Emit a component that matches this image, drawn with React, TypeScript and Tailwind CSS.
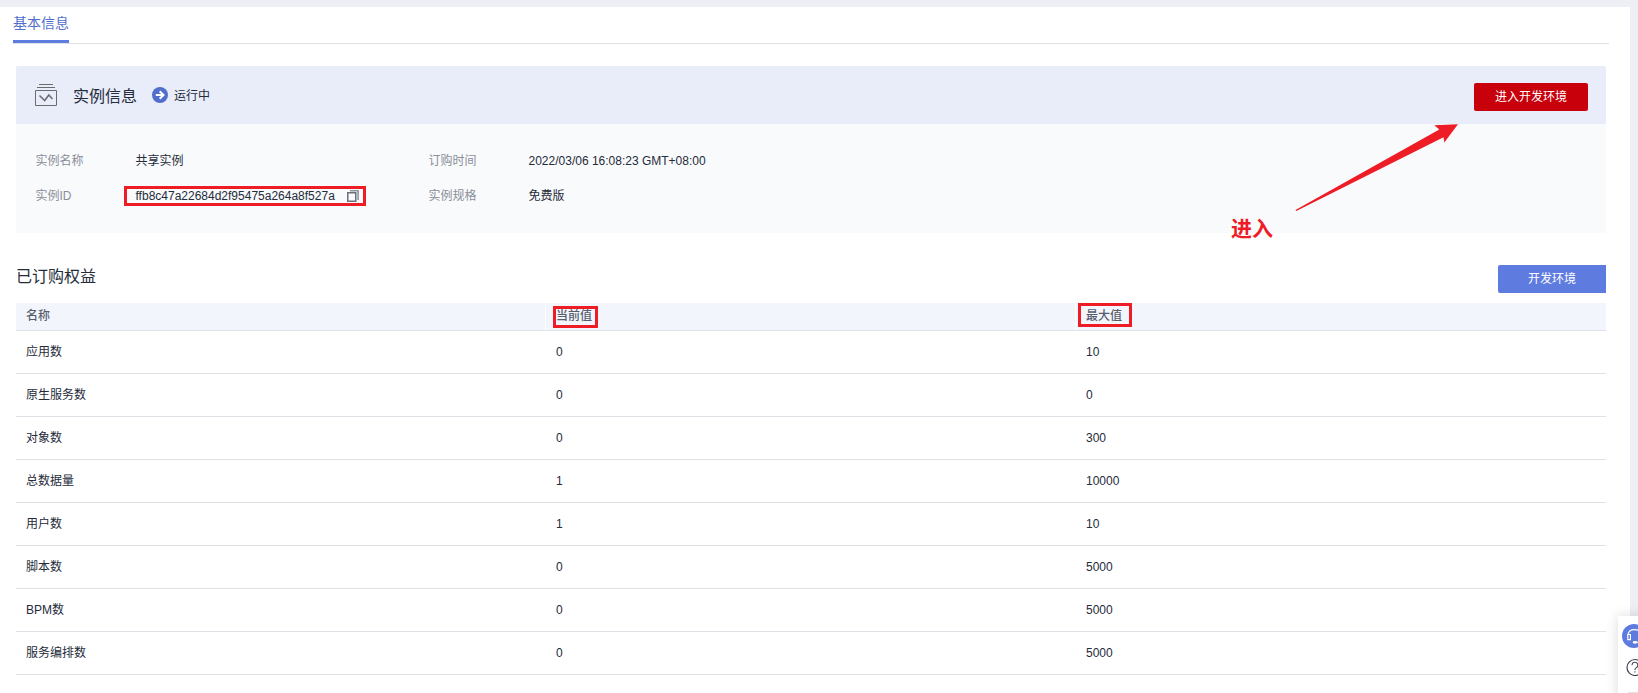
const QUOTAS = [
  { name: '应用数', current: '0', max: '10' },
  { name: '原生服务数', current: '0', max: '0' },
  { name: '对象数', current: '0', max: '300' },
  { name: '总数据量', current: '1', max: '10000' },
  { name: '用户数', current: '1', max: '10' },
  { name: '脚本数', current: '0', max: '5000' },
  { name: 'BPM数', current: '0', max: '5000' },
  { name: '服务编排数', current: '0', max: '5000' }
]

function InstanceIcon() {
  return (
    <svg width="22" height="22" viewBox="0 0 22 22" fill="none" stroke="#6b6b70">
      <path d="M4 .5h14M2 3.5h18M.5 6.5h21v15H.5z" />
      <path d="M4.500 11.500l5.200 5 4.100-5.500 3.700 4" strokeWidth="1.500" />
    </svg>
  )
}

function RunningIcon() {
  return (
    <svg width="16" height="16" viewBox="0 0 16 16" fill="none">
      <circle cx="8" cy="8" r="8" fill="#526ecc" />
      <path d="M3.800 8h7.600M7.700 4.200L11.500 8l-3.800 3.800" stroke="#fff" strokeWidth="2" />
    </svg>
  )
}

function CopyIcon() {
  return (
    <svg width="12" height="12" viewBox="0 0 12 12" fill="none">
      <path d="M3 .750h8.100V10" stroke="#8f939e" strokeWidth="1.600" />
      <rect x=".750" y="2.750" width="8" height="8.500" fill="#f9fafc" stroke="#6c6f7b" strokeWidth="1.500" />
    </svg>
  )
}

function Arrow() {
  return (
    <svg
      className="absolute top-[124px] left-[1295px]"
      width="164"
      height="88"
      viewBox="0 0 164 88"
      fill="#ee1c25"
    >
      <path d="M163 .3L139.300 1.200l5 4.200L.500 86l.800 1 147.200-73.800.800 5.300z" />
    </svg>
  )
}

function InfoItem({ label, children }: { label: string; children: React.ReactNode }) {
  return (
    <div className="flex h-[35px] items-center">
      <span className="w-[100px] text-[#8a8e99]">{label}</span>
      {children}
    </div>
  )
}

function InstancePanel() {
  return (
    <section className="overflow-hidden rounded-t-[2px]">
      <div className="flex h-[58px] items-center bg-[#e9edfa] pr-[18px] pl-[19px]">
        <InstanceIcon />
        <h2 className="mt-[3px] ml-4 text-base">实例信息</h2>
        <span className="mr-1.5 ml-[15px]">
          <RunningIcon />
        </span>
        <span className="mt-0.5">运行中</span>
        <button className="mt-1 ml-auto h-7 w-[114px] rounded-[2px] bg-[#c7000b] text-white">进入开发环境</button>
      </div>
      <div className="flex h-[109px] bg-[#f9fafc] pt-[19px] pl-[19.5px]">
        <div className="w-[393px]">
          <InfoItem label="实例名称">共享实例</InfoItem>
          <InfoItem label="实例ID">
            <span>ffb8c47a22684d2f95475a264a8f527a</span>
            <span className="ml-3">
              <CopyIcon />
            </span>
          </InfoItem>
        </div>
        <div>
          <InfoItem label="订购时间">2022/03/06 16:08:23 GMT+08:00</InfoItem>
          <InfoItem label="实例规格">免费版</InfoItem>
        </div>
      </div>
    </section>
  )
}

function QuotaTable() {
  return (
    <table className="mt-2.5 w-full table-fixed border-separate border-spacing-0 text-left">
      <thead>
        <tr className="h-7 bg-[#f2f5fc] text-[#575d6c]">
          <th className="border-r border-b border-r-white border-b-[#dfe1e6] px-2.5 pt-0 pb-px font-medium">名称</th>
          <th className="border-r border-b border-r-white border-b-[#dfe1e6] px-2.5 pt-0 pb-px font-medium">当前值</th>
          <th className="border-b border-[#dfe1e6] px-2.5 pt-0 pb-px font-medium">最大值</th>
        </tr>
      </thead>
      <tbody>
        {QUOTAS.map((quota) => (
          <tr key={quota.name} className="h-[43px]">
            <td className="border-b border-[#dfe1e6] px-2.5 py-0">{quota.name}</td>
            <td className="border-b border-[#dfe1e6] px-2.5 py-0">{quota.current}</td>
            <td className="border-b border-[#dfe1e6] px-2.5 py-0">{quota.max}</td>
          </tr>
        ))}
      </tbody>
    </table>
  )
}

function HelpDock() {
  return (
    <div className="absolute top-[616px] left-[1618px] h-[100px] w-10 bg-white pl-1 shadow-[0_0_12px_rgba(0,0,0,0.15)]">
      <svg className="mt-2" width="24" height="24" viewBox="0 0 24 24" fill="none" stroke="#fff">
        <circle cx="12" cy="12" r="12" fill="#5e7ce0" stroke="none" />
        <path d="M6 11c0-3.500 2.500-5.300 6.500-5.300S19 7.500 19 11" strokeWidth="1.200" />
        <path d="M5.800 10.500h2.600v5.200H5.800zM16.600 10.500h2.600v5.200h-2.600z" strokeWidth="1.200" />
        <path d="M18.500 16c-.6 1.500-2 2.200-4 2.400" strokeWidth="1.200" />
        <ellipse cx="13" cy="18.300" rx="2.400" ry="1.400" fill="#fff" stroke="none" />
      </svg>
      <svg className="mt-2.5 ml-1" width="18" height="18" viewBox="0 0 18 18" fill="none" stroke="#3d4353">
        <circle cx="9" cy="9.500" r="8" strokeWidth="1.200" />
        <path d="M6 7.300a2.900 2.900 0 1 1 4.400 2.300c-1 .6-1.500 1.100-1.500 2.300M8.900 13.200v1.300" strokeWidth="1.100" />
      </svg>
      <div className="mt-4 ml-1.5 h-px bg-[#dfe1e6]" />
    </div>
  )
}

export default function App() {
  return (
    <div className="relative h-[693px] w-[1638px] overflow-hidden bg-[#eeeff5] pt-[7px] pr-2 font-['Liberation_Sans','Noto_Sans_CJK_SC',sans-serif] text-xs text-[#252b3a]">
      <main className="h-full bg-white">
        <nav className="mr-[21px] ml-[13px] flex h-[37px] border-b border-[#dfe1e6]">
          <a className="h-9 border-b-3 border-[#5e7ce0] pt-[6px] text-sm text-[#526ecc]">基本信息</a>
        </nav>

        <div className="mr-6 ml-4 pt-[22px]">
          <InstancePanel />

          <div className="mt-8 flex h-7 items-center justify-between">
            <h2 className="-mt-1 text-base">已订购权益</h2>
            <button className="h-7 w-[108px] rounded-l-[2px] bg-[#5e7ce0] text-white">开发环境</button>
          </div>
          <QuotaTable />
        </div>
      </main>

      {/* callouts */}
      <div className="absolute top-[186px] left-[124px] h-5 w-[242px] border-3 border-[#ee1c25]" />
      <div className="absolute top-[306px] left-[553px] h-[22px] w-[45px] border-3 border-[#ee1c25]" />
      <div className="absolute top-[303px] left-[1078px] h-6 w-[54px] border-3 border-[#ee1c25]" />
      <Arrow />
      <span className="absolute top-[214px] left-[1231px] text-[21px] leading-[30px] font-bold text-[#ee1c25]">进入</span>

      <HelpDock />
    </div>
  )
}
